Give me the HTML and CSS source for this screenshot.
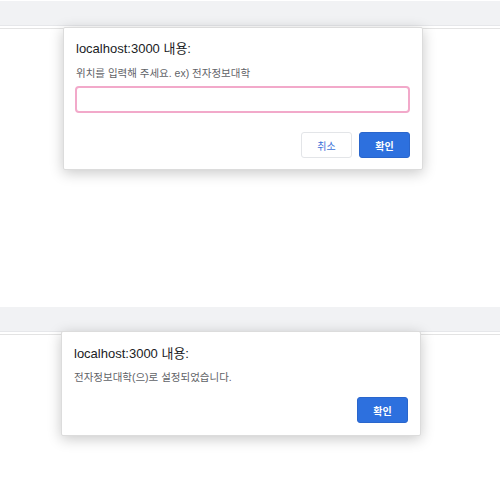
FILE: index.html
```html
<!DOCTYPE html>
<html lang="ko">
<head>
<meta charset="utf-8">
<link rel="stylesheet" href="styles.css">
</head>
<body>
<section class="screen screen-top">
  <div class="chrome"></div>
  <div class="page"></div>
  <div class="dialog dialog-prompt">
    <div class="title">localhost:3000 내용:</div>
    <div class="message">위치를 입력해 주세요. ex) 전자정보대학</div>
    <div class="input"></div>
    <div class="actions">
      <button class="btn btn-cancel">취소</button>
      <button class="btn btn-ok">확인</button>
    </div>
  </div>
</section>
<section class="screen screen-bottom">
  <div class="chrome"></div>
  <div class="page"></div>
  <div class="dialog dialog-alert">
    <div class="title">localhost:3000 내용:</div>
    <div class="message">전자정보대학(으)로 설정되었습니다.</div>
    <div class="actions">
      <button class="btn btn-ok">확인</button>
    </div>
  </div>
</section>
</body>
</html>
```
FILE: styles.css
```css
* { box-sizing: border-box; }
html, body { margin: 0; padding: 0; background: #fff; }
body {
  width: 500px;
  height: 480px;
  overflow: hidden;
  font-family: "Liberation Sans", "Noto Sans CJK KR", sans-serif;
}
.screen {
  position: relative;
  display: flex;
  flex-direction: column;
}
.screen-top { height: 307px; padding-top: 1px; }
.screen-bottom { height: 173px; }
.chrome {
  height: 25px;
  background: #f1f2f4;
  border-bottom: 1px solid #e6e7ea;
}
.page {
  flex: 1;
  margin-top: 2px;
  border-top: 1px solid #e3e3e3;
}
.dialog {
  position: absolute;
  width: 360px;
  background: #fff;
  border: 1px solid #dcdcdc;
  border-radius: 2px;
  box-shadow: 0 3px 14px rgba(0, 0, 0, 0.22);
  padding: 0 12px 0 11px;
  display: flex;
  flex-direction: column;
}
.dialog-prompt { left: 63px; top: 27px; height: 143px; }
.dialog-alert { left: 61px; top: 24px; height: 105px; }
.title {
  font-size: 13px;
  color: #202124;
  margin-top: 13px;
  padding-left: 1px;
  line-height: 15px;
}
.message {
  font-size: 10.5px;
  color: #5f6368;
  margin-top: 11px;
  padding-left: 1px;
  line-height: 13px;
}
.dialog-alert .title { margin-top: 14px; }
.dialog-alert .message { margin-top: 10px; }
.input {
  margin-top: 6px;
  height: 27px;
  border: 2px solid #f2a9ca;
  border-radius: 4px;
}
.actions {
  display: flex;
  justify-content: flex-end;
  gap: 7px;
  margin-top: 19px;
}
.dialog-alert .actions { margin-top: 13px; }
.btn {
  width: 51px;
  height: 26px;
  border-radius: 3px;
  font-family: "Noto Sans CJK KR", sans-serif;
  font-size: 10px;
  font-weight: 700;
  padding: 0;
}
.btn-cancel {
  background: #fff;
  color: #3b6fd8;
  border: 1px solid #e3e5e8;
  font-weight: 400;
}
.btn-ok {
  background: #2d70de;
  color: #fff;
  border: 1px solid #2a66cc;
}
```
